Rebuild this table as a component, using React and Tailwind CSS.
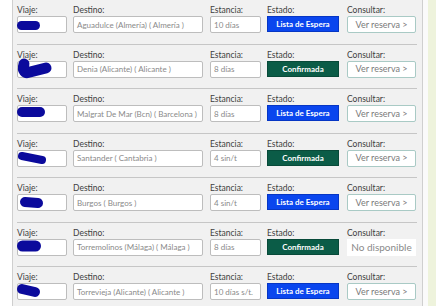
const rows = [
  { dest: 'Aguadulce (Almería) ( Almería )', est: '10 días', estado: 'espera', ver: true, blob: { d: 'M4.5 9.5 L18.5 9.5', w: 9 } },
  { dest: 'Denia (Alicante) ( Alicante )', est: '8 días', estado: 'conf', ver: true, blob: { d: 'M7 3 C5 10, 8 13, 13 11 L29 7', w: 11 } },
  { dest: 'Malgrat De Mar (Bcn) ( Barcelona )', est: '8 días', estado: 'espera', ver: true, blob: { d: 'M5 7 L23 7', w: 10 } },
  { dest: 'Santander ( Cantabria )', est: '4 sin/t', estado: 'conf', ver: true, blob: { d: 'M5 6 L25 10', w: 8 } },
  { dest: 'Burgos ( Burgos )', est: '4 sin/t', estado: 'espera', ver: true, blob: { d: 'M8 8 L21 9', w: 10 } },
  { dest: 'Torremolinos (Málaga) ( Málaga )', est: '8 días', estado: 'conf', ver: false, blob: { d: 'M5.5 7 L18.5 7', w: 11 } },
  { dest: 'Torrevieja (Alicante) ( Alicante )', est: '10 días s/t.', estado: 'espera', ver: true, blob: { d: 'M5 6 L18 9', w: 10 } },
]

function Label({ children }) {
  return <div className="h-[11px] leading-[11px] text-[8.5px] text-[#404040]">{children}</div>
}

function Field({ children, w }) {
  return (
    <div className={`${w} h-[17px] bg-white border border-[#bdbdbd] rounded-[2px] px-[3px] flex items-center text-[8px] text-[#8a8a8a] whitespace-nowrap overflow-hidden`}>
      {children}
    </div>
  )
}

export default function App() {
  return (
    <div className="w-[436px] h-[306px] overflow-hidden bg-white flex" style={{ fontFamily: 'Lato, "Noto Sans", sans-serif' }}>
      <div className="w-[12px] shrink-0" />
      <div className="w-[411px] shrink-0 bg-[#f1f1f1] border-x border-[#cfcfcf] pl-[4px] pr-[5px]">
        {rows.map((r, i) => (
          <div key={i} className="h-[44.5px] pt-[5px] border-b border-[#c6c6c6] flex">
            <div className="w-[50px]">
              <Label>Viaje:</Label>
              <div className="relative">
                <Field w="w-[50px]" />
                <svg className="absolute left-0 top-0 overflow-visible" width="50" height="17">
                  <path d={r.blob.d} stroke="#0b0a9c" strokeWidth={r.blob.w} strokeLinecap="round" strokeLinejoin="round" fill="none" />
                </svg>
              </div>
            </div>
            <div className="w-[130px] ml-[6px]">
              <Label>Destino:</Label>
              <Field w="w-[130px]">{r.dest}</Field>
            </div>
            <div className="w-[51px] ml-[7px]">
              <Label>Estancia:</Label>
              <Field w="w-[51px]">{r.est}</Field>
            </div>
            <div className="w-[72px] ml-[6px]">
              <Label>Estado:</Label>
              {r.estado === 'espera' ? (
                <div className="w-[72px] h-[16px] bg-[#0a46ee] border border-[#0636c4] flex items-center justify-center text-white font-bold text-[8px]">Lista de Espera</div>
              ) : (
                <div className="w-[72px] h-[16px] bg-[#0b5c47] border border-[#084a39] flex items-center justify-center text-white font-bold text-[8px]">Confirmada</div>
              )}
            </div>
            <div className="w-[69px] ml-[8px]">
              <Label>Consultar:</Label>
              {r.ver ? (
                <div className="w-[69px] h-[17px] bg-white border border-[#a9cac5] rounded-[2px] flex items-center justify-center text-[9px] text-[#7a7a7a]">Ver reserva &gt;</div>
              ) : (
                <div className="w-[69px] h-[17px] bg-white flex items-center justify-center text-[10px] text-[#8a8a8a]">No disponible</div>
              )}
            </div>
          </div>
        ))}
      </div>
      <div className="w-[5px] shrink-0 bg-[#fafafa]" />
      <div className="flex-1 bg-[#eef3dc]" />
    </div>
  )
}
